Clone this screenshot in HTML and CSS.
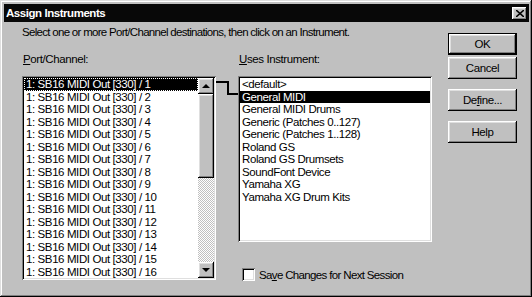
FILE: index.html
```html
<!DOCTYPE html>
<html lang="en">
<head>
    <meta charset="UTF-8">
    <title>Assign Instruments</title>
    <link rel="stylesheet" href="styles.css">
</head>
<body>
    <div class="window">
        <div class="titlebar">
            <span class="title">Assign Instruments</span>
            <button class="close" aria-label="Close">
                <svg width="8" height="7" viewBox="0 0 8 7">
                    <path d="M0 0 L8 7 M8 0 L0 7" stroke="#000" stroke-width="1.6" fill="none"/>
                </svg>
            </button>
        </div>

        <div class="dialog">
            <div class="main">
                <p class="hint">Select one or more Port/Channel destinations, then click on an Instrument.</p>

                <div class="columns">
                    <div class="col">
                        <div class="label"><u>P</u>ort/Channel:</div>
                        <div class="listbox ports">
                            <ul class="items">
                                <li class="selected focused">1: SB16 MIDI Out [330] / 1</li>
                                <li>1: SB16 MIDI Out [330] / 2</li>
                                <li>1: SB16 MIDI Out [330] / 3</li>
                                <li>1: SB16 MIDI Out [330] / 4</li>
                                <li>1: SB16 MIDI Out [330] / 5</li>
                                <li>1: SB16 MIDI Out [330] / 6</li>
                                <li>1: SB16 MIDI Out [330] / 7</li>
                                <li>1: SB16 MIDI Out [330] / 8</li>
                                <li>1: SB16 MIDI Out [330] / 9</li>
                                <li>1: SB16 MIDI Out [330] / 10</li>
                                <li>1: SB16 MIDI Out [330] / 11</li>
                                <li>1: SB16 MIDI Out [330] / 12</li>
                                <li>1: SB16 MIDI Out [330] / 13</li>
                                <li>1: SB16 MIDI Out [330] / 14</li>
                                <li>1: SB16 MIDI Out [330] / 15</li>
                                <li>1: SB16 MIDI Out [330] / 16</li>
                            </ul>
                            <div class="scrollbar">
                                <div class="sb-btn"><span class="arrow up"></span></div>
                                <div class="sb-thumb"></div>
                                <div class="sb-track"></div>
                                <div class="sb-btn"><span class="arrow down"></span></div>
                            </div>
                        </div>
                    </div>

                    <svg class="link" width="22" height="30" viewBox="0 0 22 30">
                        <path d="M0 6 H12 V18 H22" stroke="#000" stroke-width="2" fill="none"/>
                    </svg>

                    <div class="col">
                        <div class="label"><u>U</u>ses Instrument:</div>
                        <div class="listbox instruments">
                            <ul class="items">
                                <li>&lt;default&gt;</li>
                                <li class="selected">General MIDI</li>
                                <li>General MIDI Drums</li>
                                <li>Generic (Patches 0..127)</li>
                                <li>Generic (Patches 1..128)</li>
                                <li>Roland GS</li>
                                <li>Roland GS Drumsets</li>
                                <li>SoundFont Device</li>
                                <li>Yamaha XG</li>
                                <li>Yamaha XG Drum Kits</li>
                            </ul>
                        </div>
                        <label class="check">
                            <span class="box"></span>
                            <span>Sa<u>v</u>e Changes for Next Session</span>
                        </label>
                    </div>
                </div>
            </div>

            <div class="buttons">
                <button class="btn default">OK</button>
                <button class="btn">Cancel</button>
                <button class="btn spaced">De<u>f</u>ine...</button>
                <button class="btn spaced">Help</button>
            </div>
        </div>
    </div>
</body>
</html>
```

FILE: styles.css
```css
:root {
    --face: #c0c0c0;
    --light: #dfdfdf;
    --shadow: #808080;
    --dark: #000;
    --caption: #080808;
    --raised: inset -1px -1px var(--dark), inset 1px 1px #fff, inset -2px -2px var(--shadow), inset 2px 2px var(--light);
    --sunken: inset 1px 1px var(--shadow), inset -1px -1px #fff, inset 2px 2px var(--dark), inset -2px -2px var(--light);
}

* {
    box-sizing: border-box;
    margin: 0;
    padding: 0;
}

body {
    font-family: 'Liberation Sans', Arial, sans-serif;
    font-size: 11.5px;
    letter-spacing: -0.4px;
    color: #000;
    background: var(--face);
}

.window {
    width: 532px;
    height: 297px;
    background: var(--face);
    padding: 4px 3px 3px 4px;
    box-shadow: inset -1px -1px var(--dark), inset 1px 1px var(--light), inset -2px -2px var(--shadow), inset 2px 2px #fff;
    display: flex;
    flex-direction: column;
}

.titlebar {
    height: 18px;
    background: var(--caption);
    display: flex;
    align-items: center;
    justify-content: space-between;
    padding: 0 2px;
}

.title {
    color: #fff;
    font-weight: bold;
    letter-spacing: -0.45px;
}

.close {
    width: 15px;
    height: 13px;
    border: none;
    background: var(--face);
    box-shadow: var(--raised);
    display: flex;
    align-items: center;
    justify-content: center;
}

.dialog {
    display: flex;
    gap: 16px;
    padding: 4px 12px 0 18px;
}

.main {
    width: 410px;
}

.hint {
    line-height: 13px;
    margin-bottom: 14px;
    letter-spacing: -0.7px;
}

.columns {
    display: flex;
}

.col {
    display: flex;
    flex-direction: column;
}

.label {
    line-height: 13px;
    margin-bottom: 10px;
    padding-left: 1px;
}

.listbox {
    width: 194px;
    background: #fff;
    padding: 2px;
    box-shadow: var(--sunken);
    display: flex;
}

.ports {
    height: 204px;
}

.instruments {
    height: 166px;
}

.items {
    flex: 1;
    list-style: none;
}

.items li {
    height: 12.5px;
    line-height: 12.5px;
    padding-left: 2px;
    white-space: nowrap;
}

.items li.selected {
    background: #000;
    color: #fff;
}

.items li.focused {
    outline: 1px dotted #fff;
    outline-offset: -1px;
}

.scrollbar {
    width: 16px;
    display: flex;
    flex-direction: column;
}

.sb-btn {
    height: 16px;
    background: var(--face);
    box-shadow: var(--raised);
    display: flex;
    align-items: center;
    justify-content: center;
}

.sb-thumb {
    height: 84px;
    background: var(--face);
    box-shadow: var(--raised);
}

.sb-track {
    flex: 1;
    background-color: var(--face);
    background-image: conic-gradient(#fff 25%, var(--face) 0 50%, #fff 0 75%, var(--face) 0);
    background-size: 2px 2px;
}

.arrow {
    width: 0;
    height: 0;
    border-left: 4px solid transparent;
    border-right: 4px solid transparent;
}

.arrow.up {
    border-bottom: 4px solid #000;
}

.arrow.down {
    border-top: 4px solid #000;
}

.link {
    margin-top: 23px;
    flex-shrink: 0;
}

.check {
    display: flex;
    align-items: center;
    height: 13px;
    margin-top: 26px;
    padding-left: 4px;
    gap: 4px;
    letter-spacing: -0.65px;
}

.check .box {
    width: 13px;
    height: 13px;
    background: #fff;
    box-shadow: var(--sunken);
}

.buttons {
    width: 69px;
    padding-top: 7px;
    display: flex;
    flex-direction: column;
    gap: 2px;
}

.btn {
    height: 22px;
    border: none;
    background: var(--face);
    box-shadow: var(--raised);
    font: inherit;
    letter-spacing: inherit;
    color: #000;
}

.btn.default {
    box-shadow: inset 0 0 0 1px var(--dark), inset -2px -2px var(--dark), inset 2px 2px #fff, inset -3px -3px var(--shadow), inset 3px 3px var(--light);
}

.btn.spaced {
    margin-top: 8px;
}
```
